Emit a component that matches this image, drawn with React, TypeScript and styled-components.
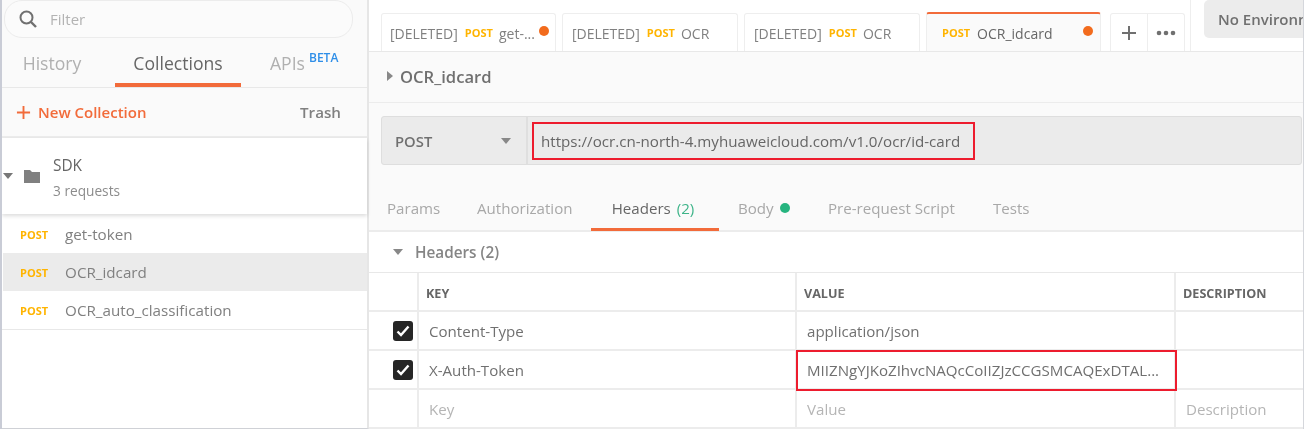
import React from "react";
import styled, { createGlobalStyle } from "styled-components";

const Global = createGlobalStyle`
  html, body { margin: 0; padding: 0; background: #fff; }
  body { font-family: "Open Sans", "Liberation Sans", sans-serif; overflow: hidden; }
  * { box-sizing: border-box; }
`;

const Page = styled.div`
  width: 1307px; height: 429px; display: flex; overflow: hidden; background: #fff;
  border-left: 2px solid #c9ccd6; padding-right: 3px; filter: blur(0.35px);
`;
const Sidebar = styled.aside`
  width: 367px; flex: none; display: flex; flex-direction: column; background: #fff;
  border-right: 2px solid #e6e6e6; border-bottom: 1px solid #cfd1d6;
`;
const SidebarTop = styled.div`background: #fafafa;`;
const FilterBox = styled.div`
  margin: 0 14px 0 2px; height: 38px; border: 1px solid #ececec;
  border-radius: 18px; display: flex; align-items: center; gap: 13px; padding-left: 14px; background: #fbfbfb;
  color: #b3b3b3; font-size: 15px;
`;
const SideTabs = styled.div`
  height: 50px; display: flex; border-bottom: 1px solid #e8e8e8;
`;
const SideTab = styled.div<{ $active?: boolean; $w: number }>`
  width: ${(p) => p.$w}px; flex: none; height: 49px; display: flex; align-items: center; justify-content: center; padding-top: 4px;
  font-size: 17.6px; color: ${(p) => (p.$active ? "#666" : "#b0b0b0")};
  border-bottom: 4px solid ${(p) => (p.$active ? "#f26b3a" : "transparent")};
`;
const ApisTab = styled(SideTab)`justify-content: flex-start; padding-left: 29px;`;
const TabGap = styled.div<{ $w: number }>`width: ${(p) => p.$w}px; flex: none;`;
const Beta = styled.span`
  color: #2e8ee8; font-size: 12px; font-weight: 600; line-height: 1; margin-left: 4px; align-self: flex-start; margin-top: 10px;
`;
const ActionRow = styled.div`
  height: 50px; display: flex; align-items: center; padding: 0 26px 0 14px;
  border-bottom: 2px solid #ececec;
`;
const NewCollection = styled.div`
  display: flex; align-items: center; gap: 7px; color: #f26b3a; font-size: 15px; font-weight: 600; flex: 1;
`;
const Trash = styled.div`color: #808080; font-size: 15.2px; font-weight: 600;`;
const CollectionRow = styled.div`
  height: 76px; display: flex; align-items: center; background: #fff; position: relative; z-index: 1;
  box-shadow: 0 2px 4px rgba(0,0,0,0.14); padding-left: 1px;
`;
const Caret = styled.div<{ $c?: string }>`
  width: 0; height: 0; flex: none; border-left: 5px solid transparent; border-right: 5px solid transparent;
  border-top: 6px solid ${(p) => p.$c || "#777"};
`;
const CollectionText = styled.div`display: flex; flex-direction: column; margin-left: 13px; margin-top: 3px;`;
const CollectionName = styled.div`font-size: 15.4px; color: #666; line-height: 20px;`;
const CollectionMeta = styled.div`font-size: 13.7px; color: #8c8c8c; line-height: 18px; margin-top: 6px;`;
const RequestList = styled.div`border-bottom: 1px solid #e8e8e8; padding-top: 1px;`;
const RequestRow = styled.div<{ $active?: boolean }>`
  height: 38px; display: flex; align-items: center; padding-left: 17px;
  margin-left: 1px; background: ${(p) => (p.$active ? "#ebebeb" : "#fff")};
`;
const Method = styled.span`color: #ffb400; font-size: 11px; font-weight: 700;`;
const RequestName = styled.span`margin-left: 17px; font-size: 15.2px; color: #808080;`;

const Main = styled.main`
  flex: 1; min-width: 0; display: flex; flex-direction: column; background: #fafafa;
  border-right: 1px solid #d5d7dc; border-bottom: 1px solid #cfd1d6;
`;
const TabStrip = styled.div`
  height: 52px; flex: none; background: #fff; display: flex; align-items: flex-end; padding-left: 12px;
  border-bottom: 1px solid #e8e8e8;
`;
const ReqTab = styled.div<{ $active?: boolean; $w: number; $gap?: number; $pl?: number }>`
  width: ${(p) => p.$w}px; height: ${(p) => (p.$active ? 39 : 38)}px; flex: none;
  margin-right: ${(p) => p.$gap ?? 6}px; padding: 2px ${(p) => (p.$active ? 7 : 6)}px 0 ${(p) => p.$pl ?? 9}px;
  display: flex; align-items: center; font-size: 14px; color: #808080; background: ${(p) => (p.$active ? "#fafafa" : "#fff")};
  border: 1px solid #eeeeee; border-bottom: none; border-radius: 3px 3px 0 0;
  border-top: ${(p) => (p.$active ? "2px solid #f26b3a" : "1px solid #eeeeee")};
`;
const TabMethod = styled.span`color: #ffb400; font-size: 11px; font-weight: 700; margin: -2px 6px 0 7px;`;
const ActiveMethod = styled(TabMethod)`margin: -2px 7px 0 0;`;
const TabLabel = styled.span`flex: none; white-space: nowrap;`;
const TabName = styled.span<{ $dark?: boolean }>`flex: 1; color: ${(p) => (p.$dark ? "#666" : "#808080")}; white-space: nowrap;`;
const Dot = styled.span<{ $c: string }>`width: 10px; height: 10px; border-radius: 50%; background: ${(p) => p.$c}; flex: none; display: inline-block;`;
const TabDot = styled(Dot)`margin-top: -5px;`;
const IconGroup = styled.div`
  margin-left: 4px; width: 75px; height: 38px; flex: none; display: flex; border: 1px solid #eeeeee; border-bottom: none; border-radius: 3px 3px 0 0;
`;
const IconCell = styled.div`
  flex: 1; display: flex; align-items: center; justify-content: center; color: #707070;
  & + & { border-left: 1px solid #eeeeee; }
`;
const EnvDivider = styled.div`width: 1px; height: 51px; background: #eeeeee; margin-left: 5px; flex: none;`;
const EnvBox = styled.div`
  margin: 0 0 13px 13px; flex: 1; height: 38px; background: #ececec; border-radius: 5px 0 0 5px; align-self: flex-start;
  font-size: 15px; font-weight: 600; color: #707070; display: flex; align-items: center; padding-left: 14px; white-space: nowrap; overflow: hidden;
`;
const NameRow = styled.div`
  height: 51px; flex: none; display: flex; align-items: center; padding: 0 0 2px 18px; gap: 7px;
  border-bottom: 1px solid #ececec; font-size: 16.6px; font-weight: 600; color: #707070;
`;
const SideCaret = styled.div`
  width: 0; height: 0; border-top: 5px solid transparent; border-bottom: 5px solid transparent; border-left: 6px solid #888;
`;
const UrlSection = styled.div`height: 88px; flex: none; padding: 13px 1px 0 12px;`;
const UrlBar = styled.div`
  height: 49px; display: flex; background: #ebebeb; border: 1px solid #dedede; border-radius: 3px;
`;
const MethodSelect = styled.div`
  width: 146px; flex: none; border-right: 2px solid #dfdfdf; display: flex; align-items: center; justify-content: space-between;
  padding: 0 15px 0 13px; font-size: 14.8px; font-weight: 600; color: #707070;
`;
const UrlInput = styled.div`flex: 1; display: flex; align-items: center; padding-left: 4px;`;
const UrlHighlight = styled.div`
  width: 443px; height: 38px; border: 2px solid #ed1c2e; display: flex; align-items: center; padding-left: 7px; font-size: 15.15px; color: #666; white-space: nowrap;
`;
const ReqTabs = styled.div`height: 41px; flex: none; display: flex; padding-left: 18px; border-bottom: 2px solid #ececec;`;
const ReqTabItem = styled.div<{ $active?: boolean; $w: number; $ml?: number }>`
  width: ${(p) => p.$w}px; margin-left: ${(p) => p.$ml ?? 0}px; flex: none; display: flex; align-items: center; gap: 6px; white-space: nowrap;
  justify-content: ${(p) => (p.$active ? "center" : "flex-start")};
  font-size: 15.1px; color: ${(p) => (p.$active ? "#666" : "#a8a8a8")}; height: 40px;
  padding-bottom: ${(p) => (p.$active ? 3 : 6)}px; padding-right: ${(p) => (p.$active ? 4 : 0)}px;
  border-bottom: ${(p) => (p.$active ? "3px solid #f26b3a" : "none")};
`;
const Count = styled.span`color: #3eb489;`;
const HeadersPanel = styled.div`flex: 1; background: #fff; min-height: 0;`;
const HeadersTitle = styled.div`
  height: 41px; display: flex; align-items: center; padding-left: 24px; gap: 12px; font-size: 15.3px; font-weight: 600; color: #858585;
  border-bottom: 1px solid #e8e8e8;
`;
const Table = styled.div`display: grid; grid-template-columns: 50px 378px 379px 1fr; grid-auto-rows: 39px;`;
const Cell = styled.div<{ $last?: boolean; $first?: boolean; $red?: boolean }>`
  display: flex; align-items: center; min-width: 0; padding-left: 10px; font-size: 15.1px; color: #707070; white-space: nowrap;
  border-bottom: 2px solid #ececec;
  border-right: ${(p) => (p.$last ? "none" : "2px solid #ececec")};
  ${(p) => p.$first && "justify-content: flex-end; padding-left: 0; padding-right: 4px;"}
  ${(p) => p.$red && "outline: 2px solid #ed1c2e; outline-offset: -1px; z-index: 1;"}
`;
const HeadCell = styled(Cell)`font-size: 12.6px; font-weight: 700; color: #666; padding-left: 7px; padding-top: 3px;`;
const Placeholder = styled.span`color: #b5b5b5;`;
const Check = styled.div`
  width: 20px; height: 20px; border-radius: 3px; background: #262626; display: flex; align-items: center; justify-content: center;
`;

const Plus = ({ c, s }: { c: string; s: number }) => (
  <svg width={s} height={s} viewBox="0 0 16 16"><path d="M8 1v14M1 8h14" stroke={c} strokeWidth="2" /></svg>
);
const CheckMark = () => (
  <svg width="14" height="12" viewBox="0 0 14 12"><path d="M1.5 6.5 5 10l7.5-8.5" fill="none" stroke="#fff" strokeWidth="2.4" /></svg>
);

export default function App() {
  return (
    <Page>
      <Global />
      <Sidebar>
        <SidebarTop>
          <FilterBox>
            <svg width="18" height="18" viewBox="0 0 18 18"><circle cx="7.5" cy="7.5" r="6" fill="none" stroke="#707070" strokeWidth="2" /><path d="M12 12l5 5" stroke="#707070" strokeWidth="2.4" /></svg>
            Filter
          </FilterBox>
          <SideTabs>
            <SideTab $w={100}>History</SideTab>
            <TabGap $w={13} />
            <SideTab $w={126} $active>Collections</SideTab>
            <ApisTab $w={123}>APIs<Beta>BETA</Beta></ApisTab>
          </SideTabs>
          <ActionRow>
            <NewCollection><Plus c="#f26b3a" s={15} />New Collection</NewCollection>
            <Trash>Trash</Trash>
          </ActionRow>
        </SidebarTop>
        <CollectionRow>
          <Caret />
          <svg style={{ marginLeft: 11 }} width="16" height="13" viewBox="0 0 16 13"><path d="M0 0h6l2 2h8v11H0z" fill="#808080" /></svg>
          <CollectionText>
            <CollectionName>SDK</CollectionName>
            <CollectionMeta>3 requests</CollectionMeta>
          </CollectionText>
        </CollectionRow>
        <RequestList>
          <RequestRow><Method>POST</Method><RequestName>get-token</RequestName></RequestRow>
          <RequestRow $active><Method>POST</Method><RequestName>OCR_idcard</RequestName></RequestRow>
          <RequestRow><Method>POST</Method><RequestName>OCR_auto_classification</RequestName></RequestRow>
        </RequestList>
      </Sidebar>
      <Main>
        <TabStrip>
          <ReqTab $w={175} $pl={8}><TabLabel>[DELETED]</TabLabel><TabMethod>POST</TabMethod><TabName>get-...</TabName><TabDot $c="#f26b1d" /></ReqTab>
          <ReqTab $w={176}><TabLabel>[DELETED]</TabLabel><TabMethod>POST</TabMethod><TabName>OCR</TabName></ReqTab>
          <ReqTab $w={176}><TabLabel>[DELETED]</TabLabel><TabMethod>POST</TabMethod><TabName>OCR</TabName></ReqTab>
          <ReqTab $w={175} $active $gap={5} $pl={15}><ActiveMethod>POST</ActiveMethod><TabName $dark>OCR_idcard</TabName><TabDot $c="#f26b1d" /></ReqTab>
          <IconGroup>
            <IconCell><Plus c="#707070" s={16} /></IconCell>
            <IconCell><svg width="20" height="6" viewBox="0 0 20 6"><circle cx="3" cy="3" r="2.3" fill="#707070" /><circle cx="10" cy="3" r="2.3" fill="#707070" /><circle cx="17" cy="3" r="2.3" fill="#707070" /></svg></IconCell>
          </IconGroup>
          <EnvDivider />
          <EnvBox>No Environment</EnvBox>
        </TabStrip>
        <NameRow><SideCaret />OCR_idcard</NameRow>
        <UrlSection>
          <UrlBar>
            <MethodSelect>POST<Caret $c="#888" /></MethodSelect>
            <UrlInput><UrlHighlight>https://ocr.cn-north-4.myhuaweicloud.com/v1.0/ocr/id-card</UrlHighlight></UrlInput>
          </UrlBar>
        </UrlSection>
        <ReqTabs>
          <ReqTabItem $w={90}>Params</ReqTabItem>
          <ReqTabItem $w={114}>Authorization</ReqTabItem>
          <ReqTabItem $w={128} $active>Headers <Count>(2)</Count></ReqTabItem>
          <ReqTabItem $w={90} $ml={19}>Body<Dot $c="#26b47f" /></ReqTabItem>
          <ReqTabItem $w={165}>Pre-request Script</ReqTabItem>
          <ReqTabItem $w={60}>Tests</ReqTabItem>
        </ReqTabs>
        <HeadersPanel>
          <HeadersTitle><Caret $c="#888" />Headers (2)</HeadersTitle>
          <Table>
            <HeadCell $first />
            <HeadCell>KEY</HeadCell>
            <HeadCell>VALUE</HeadCell>
            <HeadCell $last>DESCRIPTION</HeadCell>
            <Cell $first><Check><CheckMark /></Check></Cell>
            <Cell>Content-Type</Cell>
            <Cell>application/json</Cell>
            <Cell $last />
            <Cell $first><Check><CheckMark /></Check></Cell>
            <Cell>X-Auth-Token</Cell>
            <Cell $red>MIIZNgYJKoZIhvcNAQcCoIIZJzCCGSMCAQExDTAL...</Cell>
            <Cell $last />
            <Cell $first />
            <Cell><Placeholder>Key</Placeholder></Cell>
            <Cell><Placeholder>Value</Placeholder></Cell>
            <Cell $last><Placeholder>Description</Placeholder></Cell>
          </Table>
        </HeadersPanel>
      </Main>
    </Page>
  );
}
